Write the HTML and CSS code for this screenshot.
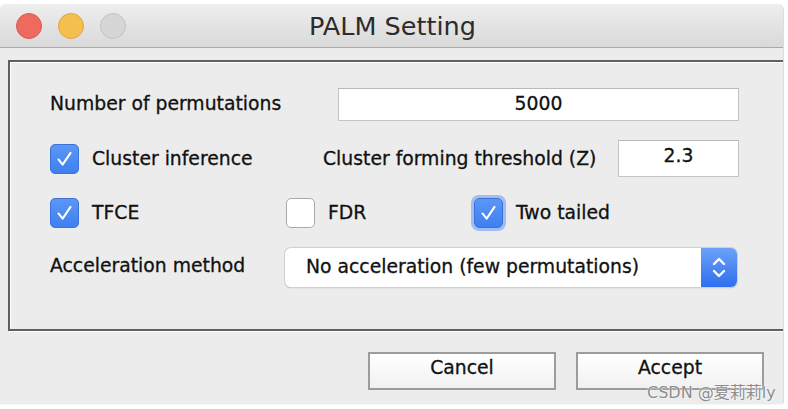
FILE: index.html
```html
<!DOCTYPE html>
<html>
<head>
<meta charset="utf-8">
<link rel="stylesheet" href="styles.css">
</head>
<body>
<div class="window">
  <div class="titlebar">
    <div class="lights">
      <span class="light red"></span>
      <span class="light yellow"></span>
      <span class="light gray"></span>
    </div>
    <div class="title">PALM Setting</div>
  </div>
  <div class="content">
    <div class="group">
      <div class="row row1">
        <div class="label w288">Number of permutations</div>
        <div class="field f-perm">5000</div>
      </div>
      <div class="row row2">
        <div class="check-item w273">
          <span class="cb on"><svg viewBox="0 0 29 30"><path d="M8 15.5 L12.5 21 L21 8.5" /></svg></span>
          <span class="label">Cluster inference</span>
        </div>
        <div class="label">Cluster forming threshold (Z)</div>
        <div class="field f-z">2.3</div>
      </div>
      <div class="row row3">
        <div class="check-item w236">
          <span class="cb on"><svg viewBox="0 0 29 30"><path d="M8 15.5 L12.5 21 L21 8.5" /></svg></span>
          <span class="label">TFCE</span>
        </div>
        <div class="check-item w188">
          <span class="cb off"></span>
          <span class="label">FDR</span>
        </div>
        <div class="check-item">
          <span class="cb on focus"><svg viewBox="0 0 29 30"><path d="M8 15.5 L12.5 21 L21 8.5" /></svg></span>
          <span class="label">Two tailed</span>
        </div>
      </div>
      <div class="row row4">
        <div class="label w235">Acceleration method</div>
        <div class="select">
          <span class="select-text">No acceleration (few permutations)</span>
          <span class="stepper"><svg viewBox="0 0 36 39"><path d="M13 16 L18 11 L23 16 M13 23 L18 28 L23 23" /></svg></span>
        </div>
      </div>
    </div>
    <div class="buttons">
      <div class="btn">Cancel</div>
      <div class="btn">Accept</div>
    </div>
  </div>
</div>
<div class="watermark">CSDN @夏莉莉ly</div>
</body>
</html>
```

FILE: styles.css
```css
html, body {
  margin: 0;
  padding: 0;
  background: #ffffff;
}
body {
  width: 788px;
  height: 409px;
  overflow: hidden;
  position: relative;
  font-family: "DejaVu Sans", "Liberation Sans", sans-serif;
  color: #111111;
}
.window {
  margin-top: 4px;
  width: 783px;
  height: 399px;
  background: #ececec;
  border-radius: 6px 6px 0 0;
  box-shadow: 1px 0 0 #dcdcdc, 0 1px 2px #e4e4e4;
  overflow: hidden;
}
.titlebar {
  height: 43px;
  background: linear-gradient(#eeeeee, #d9d9d9);
  border-bottom: 1px solid #a9a9a9;
  display: flex;
  align-items: center;
  position: relative;
}
.lights {
  display: flex;
  gap: 16px;
  padding-left: 16px;
  position: relative;
  z-index: 1;
}
.light {
  width: 24px;
  height: 24px;
  border-radius: 50%;
  border: 1px solid;
}
.red { background: #ee6a5f; border-color: #d65a4f; }
.yellow { background: #f5bf4f; border-color: #dba53c; }
.gray { background: #d6d6d6; border-color: #c2c2c2; }
.title {
  position: absolute;
  left: 0;
  right: 0;
  text-align: center;
  font-size: 25.5px;
  color: #2c2c2c;
  top: 7px;
  padding-left: 2px;
}
.content {
  padding: 12px 0 0 8px;
}
.group {
  width: 755px;
  height: 267px;
  border: 2px solid #5f5f5f;
  box-shadow: 1px 1px 0 #ffffff, inset 1px 1px 0 #ffffff;
  display: flex;
  flex-direction: column;
  padding-left: 40px;
  box-sizing: content-box;
}
.row {
  display: flex;
  align-items: center;
  width: 689px;
}
.row1 { margin-top: 26px; height: 33px; }
.row2 { margin-top: 19px; height: 37px; }
.row3 { margin-top: 18px; height: 35px; }
.row4 { margin-top: 18px; height: 39px; }
.label {
  font-size: 18.8px;
  white-space: nowrap;
  -webkit-text-stroke: 0.3px #111111;
}
.row1 .label { margin-top: -3px; }
.row4 > .label { margin-top: -4px; }
.w288 { width: 288px; flex: none; }
.w273 { width: 273px; flex: none; }
.w236 { width: 236px; flex: none; }
.w188 { width: 188px; flex: none; }
.w235 { width: 235px; flex: none; }
.field {
  background: #ffffff;
  border: 1px solid #c4c4c4;
  border-top-color: #b8b8b8;
  box-sizing: border-box;
  font-size: 18.8px;
  -webkit-text-stroke: 0.3px #111111;
  display: flex;
  align-items: center;
  justify-content: center;
  padding-bottom: 3px;
}
.f-perm { width: 401px; height: 33px; }
.f-z { width: 121px; height: 37px; margin-left: auto; padding-bottom: 6px; }
.check-item {
  display: flex;
  align-items: center;
  gap: 13px;
}
.check-item .label { margin-top: -1px; }
.cb {
  width: 29px;
  height: 30px;
  border-radius: 5px;
  box-sizing: border-box;
  flex: none;
  display: block;
}
.cb.on {
  background: linear-gradient(#5b97f6, #3f7ff0);
  border: 1px solid #3a72d8;
}
.cb.off {
  background: #ffffff;
  border: 1px solid #a9a9a9;
}
.cb.focus {
  box-shadow: 0 0 0 3px rgba(100, 150, 245, 0.55);
}
.cb svg {
  width: 100%;
  height: 100%;
  display: block;
}
.cb svg path {
  fill: none;
  stroke: #ffffff;
  stroke-width: 2.2;
  stroke-linecap: round;
  stroke-linejoin: round;
}
.select {
  width: 452px;
  height: 39px;
  background: #ffffff;
  border-radius: 6px;
  box-shadow: 0 0 0 1px #d0d0d0, 0 1px 1px #9a9a9a;
  display: flex;
  align-items: center;
  overflow: hidden;
}
.select-text {
  font-size: 18.8px;
  -webkit-text-stroke: 0.3px #111111;
  padding-left: 21px;
  flex: 1;
  margin-top: -3px;
}
.stepper {
  width: 36px;
  height: 39px;
  background: linear-gradient(#6aa2f8, #2f6ef0);
  display: block;
  flex: none;
}
.stepper svg { width: 100%; height: 100%; display: block; }
.stepper svg path {
  fill: none;
  stroke: #ffffff;
  stroke-width: 2.4;
  stroke-linecap: round;
  stroke-linejoin: round;
}
.buttons {
  display: flex;
  gap: 20px;
  margin-top: 21px;
  padding-left: 360px;
}
.btn {
  width: 188px;
  height: 38px;
  box-sizing: border-box;
  border: 2px solid #9c9c9c;
  background: linear-gradient(#ffffff, #f1f1f1);
  font-size: 18.8px;
  -webkit-text-stroke: 0.3px #111111;
  display: flex;
  align-items: center;
  justify-content: center;
  padding-bottom: 8px;
}
.watermark {
  position: absolute;
  left: 647px;
  top: 379px;
  font-family: "DejaVu Sans", "Noto Sans CJK SC", sans-serif;
  font-size: 16px;
  color: #8c8c8c;
  text-shadow: 0 0 1px #ffffff, 0 0 2px #ffffff;
  white-space: nowrap;
}
```
